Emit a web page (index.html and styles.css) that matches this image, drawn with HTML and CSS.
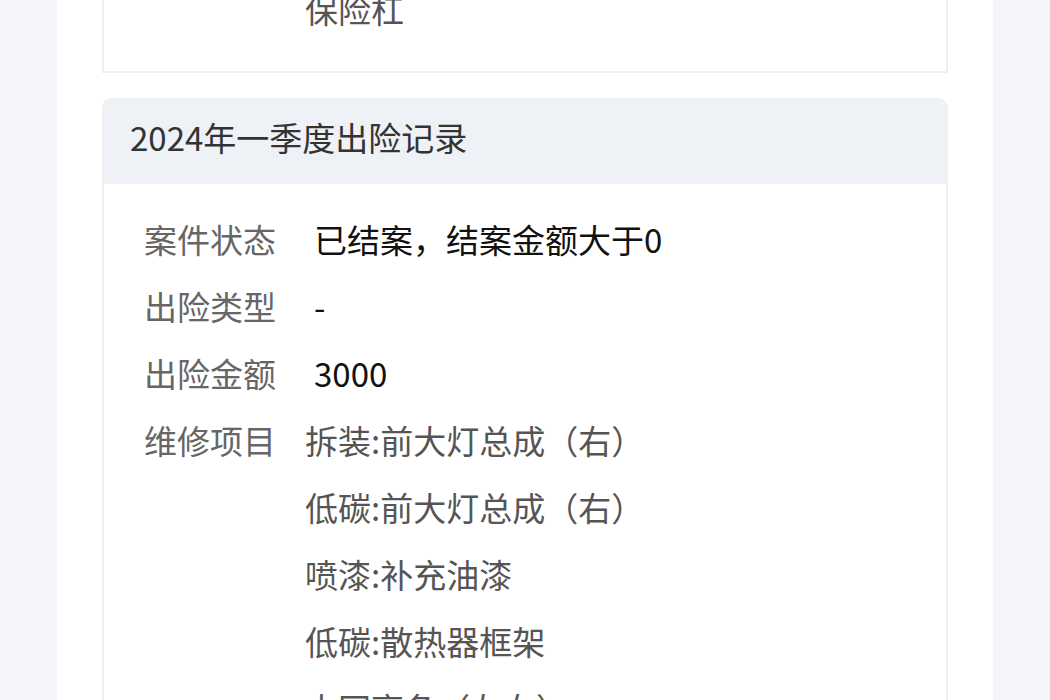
FILE: index.html
```html
<!DOCTYPE html>
<html lang="zh-CN">
<head>
    <meta charset="UTF-8">
    <meta name="viewport" content="width=device-width, initial-scale=1.0">
    <title>出险记录</title>
    <link rel="stylesheet" href="styles.css">
</head>
<body>

    <div class="panel">
        <!-- tail of the previous record, scrolled mostly out of view -->
        <div class="record record-prev">
            <div class="record-body">
                <div class="row">
                    <span class="label"></span>
                    <ul class="items">
                        <li>保险杠</li>
                    </ul>
                </div>
            </div>
        </div>

        <div class="record">
            <h3 class="record-title">2024年一季度出险记录</h3>
            <div class="record-body">
                <div class="row">
                    <span class="label">案件状态</span>
                    <span class="value">已结案，结案金额大于0</span>
                </div>
                <div class="row">
                    <span class="label">出险类型</span>
                    <span class="value">-</span>
                </div>
                <div class="row">
                    <span class="label">出险金额</span>
                    <span class="value">3000</span>
                </div>
                <div class="row">
                    <span class="label">维修项目</span>
                    <ul class="items">
                        <li>拆装:前大灯总成（右）</li>
                        <li>低碳:前大灯总成（右）</li>
                        <li>喷漆:补充油漆</li>
                        <li>低碳:散热器框架</li>
                        <li>中网亮条（左右）</li>
                    </ul>
                </div>
            </div>
        </div>
    </div>

</body>
</html>
```

FILE: styles.css
```css
* {
    margin: 0;
    padding: 0;
    box-sizing: border-box;
    font-family: "Noto Sans CJK SC", "Noto Sans", sans-serif;
}

body {
    background: #f4f5f9;
    color: #333;
    font-size: 33px;
    height: 100vh;
    overflow: hidden;
}

.panel {
    width: 936px;
    margin: 0 auto;
    min-height: 100vh;
    background: #fff;
    padding: 0 45px;
    display: flex;
    flex-direction: column;
    gap: 25px;
}

.record {
    border: 2px solid #efefef;
    border-radius: 10px;
    overflow: hidden;
}

.record-prev {
    margin-top: -48px;
    border-radius: 0;
}

.record-title {
    background: #eef1f6;
    font-size: 33px;
    font-weight: 400;
    line-height: 46px;
    padding: 14px 26px 24px;
    color: #333;
}

.record-body {
    padding: 32px 40px 39px;
    display: flex;
    flex-direction: column;
    gap: 21px;
}

.row {
    display: flex;
    line-height: 46px;
}

.label {
    width: 132px;
    flex-shrink: 0;
    color: #666;
}

.value {
    margin-left: 38px;
    color: #111;
}

.items {
    list-style: none;
    margin-left: 29px;
    color: #555;
    display: flex;
    flex-direction: column;
    gap: 21px;
}
```
